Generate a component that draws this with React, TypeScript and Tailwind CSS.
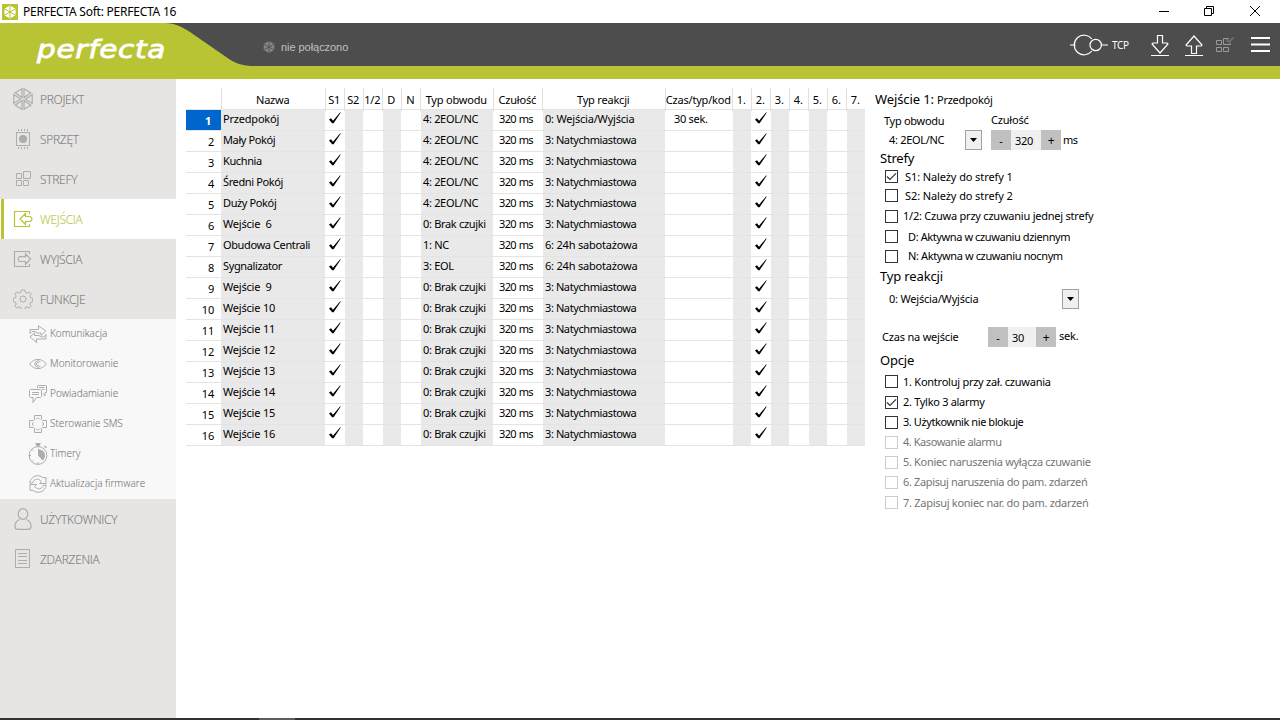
import type { ReactNode } from "react";

type IconProps = { children: ReactNode; w: number; h: number; className?: string };

function Icon({ children, w, h, className = "" }: IconProps) {
  return (
    <svg width={w} height={h} viewBox={`0 0 ${w} ${h}`} fill="none" stroke="currentColor" strokeWidth="1" className={`shrink-0 ${className}`}>
      {children}
    </svg>
  );
}

function HexIcon() {
  return (
    <Icon w={20} h={22}>
      <path d="M9 .8 2.200 4.700 9 9.500zM11 .8l6.800 3.900L11 9.500zM.8 6.500v9L7.600 11zM19.200 6.500v9L12.400 11zM9 21.200l-6.800-3.900L9 12.500zM11 21.200l6.800-3.900-6.800-4.800z" strokeWidth="1.200" />
    </Icon>
  );
}

function ChipIcon() {
  return (
    <Icon w={20} h={20}>
      <rect x="3.500" y="3.500" width="13" height="13" />
      <circle cx="10" cy="10" r="4" fill="currentColor" stroke="none" />
      <path d="M5.500 0v2M8.500 0v2M11.500 0v2M14.500 0v2M5.500 18v2M8.500 18v2M11.500 18v2M14.500 18v2" />
    </Icon>
  );
}

function ZonesIcon() {
  return (
    <Icon w={18} h={18}>
      <path d="M2.500 3.500h5v5h-5zM2.500 10.500h5v5h-5zM9.500 10.500h5v5h-5zM9.500 1.500h7v7h-7z" />
    </Icon>
  );
}

function InputIcon() {
  return (
    <Icon w={20} h={18} className="[stroke-width:1.2]">
      <path d="M16.500 4V1.500h-15v15h15V14" />
      <path d="M7 9l5.500-5.500v3h4.700L18.800 8v2l-1.600 1.500h-4.700v3z" />
    </Icon>
  );
}

function OutputIcon() {
  return (
    <Icon w={20} h={18} className="[stroke-width:1.2]">
      <path d="M16.500 4V1.500h-15v15h15V14" />
      <path d="M17.500 9l-5-5.300v3H6.500L5.300 8v2l1.200 1.500h6v3z" />
    </Icon>
  );
}

function GearIcon() {
  return (
    <Icon w={20} h={20}>
      <circle cx="10" cy="10" r="3" />
      <path d="M8.300 1h3.400l.6 2.500 1.700.7 2.200-1.300 1.900 1.900-1.300 2.200.7 1.700 2.200.6v3.400l-2.200.6-.7 1.700 1.300 2.200-1.900 1.900-2.200-1.300-1.700.7-.6 2.200H8.300l-.6-2.200-1.700-.7-2.200 1.300-1.900-1.900L3.200 15l-.7-1.700-2.200-.6V9.300l2.200-.6L3.200 7 1.900 4.800l1.900-1.900L6 4.200l1.700-.7z" strokeLinejoin="round" />
    </Icon>
  );
}

function SwapIcon() {
  return (
    <Icon w={18} h={18}>
      <path d="M1 8.500v-4h8.500V.7L16.800 6 12 10.500V8H8L6 6.500H3z" />
      <path d="M17 9.500v4.500H7.500v3.500L1 11.800 5.500 8v2.500H10l2 1.500h3z" />
    </Icon>
  );
}

function EyeIcon() {
  return (
    <Icon w={18} h={12}>
      <path d="M.7 6C5-.2 13-.2 17.300 6 13 12.200 5 12.200.7 6z" />
      <path d="M11.500 4a3.200 3.200 0 1 0 0 4M10 5a1.500 1.500 0 1 0 0 2" />
    </Icon>
  );
}

function ChatIcon() {
  return (
    <Icon w={18} h={20}>
      <path d="M1.500 5.500h10l1 1v6l-1 1H7.500L4 18.500v-5H1.500l-1-1v-6zM3 8.500h7M3 10.500h7" />
      <path d="M8.500 4V2l1-.5h7l1 .5v6.500H16V12l-2-2.500M10 3.500h5.500M13 5.500h2.500" />
    </Icon>
  );
}

function PadIcon() {
  return (
    <Icon w={18} h={18}>
      <path d="M5.500.5h7v4l1 1h4v7h-4l-1 1v4h-7v-4l-1-1h-4v-7h4l1-1z" />
      <path d="M7 4.500l2-2 2 2M7 13.500l2 2 2-2M5 7L3 9l2 2M13 7l2 2-2 2" />
    </Icon>
  );
}

function TimerIcon() {
  return (
    <Icon w={20} h={22}>
      <circle cx="10" cy="12.500" r="8.900" />
      <path d="M7.500.7h5M10 .7v3M8 2h4M16.500 3l1.800 1.800" strokeWidth="1.500" />
      <path d="M10 6v6.500l4.600 5c4-3 3.500-10.500-4.600-11.500z" fill="currentColor" stroke="none" />
      <path d="M1 12.500h2M10 19v2M4 6.500l1.200 1.200M4 18.500l1.200-1.200" />
    </Icon>
  );
}

function RefreshIcon() {
  return (
    <Icon w={18} h={18}>
      <path d="M.7 8C2 1 9-1.500 14.200 2.800L17 2.500v6h-6.500l2-2C9 2.700 5 3.800 3.500 8z" />
      <path d="M17.300 10C16 17 9 19.500 3.800 15.200L1 15.500v-6h6.500l-2 2c3.500 3.800 7.500 2.700 9-1.500z" />
    </Icon>
  );
}

function UserIcon() {
  return (
    <Icon w={18} h={22}>
      <ellipse cx="9" cy="6" rx="4.800" ry="5.300" strokeWidth="1.200" />
      <path d="M5.500 11.500C3 12.500 1 14 1 18.500c0 2 1 2.900 3 2.900h10c2 0 3-.9 3-2.900 0-4.500-2-6-4.500-7" strokeWidth="1.200" />
    </Icon>
  );
}

function ListIcon() {
  return (
    <Icon w={18} h={20}>
      <path d="M1.500.5h14v18h-14zM4 4.500h9M4 7.500h9M4 11.500h9M4 14.500h9" />
    </Icon>
  );
}

function NavItem({ icon, label, active = false }: { icon: ReactNode; label: string; active?: boolean }) {
  return (
    <div className={active ? "flex h-10 items-center bg-white pl-px text-[#b8c433]" : "flex h-10 items-center pl-px text-[#767676]"}>
      <span className={active ? "h-10 w-[3px] bg-[#b8c433]" : "h-10 w-[3px]"} />
      <span className={active ? "flex w-9 justify-center pl-px" : "flex w-9 justify-center pl-px text-[#adadab]"}>{icon}</span>
      <span className="pt-px text-[12px] font-light tracking-[-0.3px] [-webkit-text-stroke:0.1px_currentColor]">{label}</span>
    </div>
  );
}

function SubItem({ icon, label }: { icon: ReactNode; label: string }) {
  return (
    <div className="flex h-[30px] items-center pb-px pl-[27px] text-[#767676]">
      <span className="flex w-[23px] justify-center pr-0.5 text-[#adadab]">{icon}</span>
      <span className="text-[10px] font-light tracking-[0.03px] [-webkit-text-stroke:0.1px_currentColor]">{label}</span>
    </div>
  );
}

function Sidebar() {
  return (
    <nav className="flex w-44 shrink-0 flex-col bg-[#e6e5e3] font-['Open_Sans',sans-serif]">
      <NavItem icon={<HexIcon />} label="PROJEKT" />
      <NavItem icon={<ChipIcon />} label="SPRZĘT" />
      <NavItem icon={<ZonesIcon />} label="STREFY" />
      <NavItem icon={<InputIcon />} label="WEJŚCIA" active />
      <NavItem icon={<OutputIcon />} label="WYJŚCIA" />
      <NavItem icon={<GearIcon />} label="FUNKCJE" />
      <div className="bg-[#f8f8f8]">
        <SubItem icon={<SwapIcon />} label="Komunikacja" />
        <SubItem icon={<EyeIcon />} label="Monitorowanie" />
        <SubItem icon={<ChatIcon />} label="Powiadamianie" />
        <SubItem icon={<PadIcon />} label="Sterowanie SMS" />
        <SubItem icon={<TimerIcon />} label="Timery" />
        <SubItem icon={<RefreshIcon />} label="Aktualizacja firmware" />
      </div>
      <NavItem icon={<UserIcon />} label="UŻYTKOWNICY" />
      <NavItem icon={<ListIcon />} label="ZDARZENIA" />
    </nav>
  );
}

function TitleBar() {
  return (
    <div className="flex h-[23px] items-center bg-white pl-0.5">
      <svg width="16" height="16" viewBox="0 0 16 16">
        <rect width="16" height="16" fill="#b8c433" />
        <path d="M8 1.500 13.600 4.700v6.600L8 14.500 2.400 11.300V4.700z" fill="#fff" />
        <path d="M8 1v14M2 4.600l12 6.800M14 4.600 2 11.400" stroke="#b8c433" strokeWidth="1" />
      </svg>
      <span className="ml-[5px] text-[12px] tracking-[-0.24px] text-black">PERFECTA Soft: PERFECTA 16</span>
      <div className="ml-auto flex items-center text-black">
        <Icon w={12} h={12} className="mr-[33px]"><path d="M1 5.500h10" /></Icon>
        <Icon w={12} h={12} className="mr-[34px]"><path d="M1.500 2.500h7v7h-7zM3.500 2.500v-2h7v7H9" /></Icon>
        <Icon w={12} h={12} className="mr-[19px]"><path d="M1 0l10 10M11 0 1 10" /></Icon>
      </div>
    </div>
  );
}

function Header() {
  return (
    <header className="flex h-14 bg-[#b8c433]">
      <div className="relative w-[256px] shrink-0">
        <svg width="256" height="43" viewBox="0 0 256 43" className="block">
          <path d="M165 0c10 .5 16 3 25 9l39 27c9 5.500 15 7 27 7V0z" fill="#4d4d4d" />
        </svg>
        <span className="absolute top-3 left-[37px] origin-left scale-x-[1.18] font-['DejaVu_Sans',sans-serif] text-[25px] leading-[30px] tracking-[0.6px] text-white italic [-webkit-text-stroke:0.8px_#fff]">perfecta</span>
      </div>
      <div className="flex h-[43px] grow items-center bg-[#4d4d4d] pl-[7px]">
        <svg width="12" height="12" viewBox="0 0 12 12" className="mt-[5px]">
          <path d="M6 0 11.300 3v6L6 12 .7 9V3z" fill="#858585" />
          <path d="M6 0v12M.5 3l11 6M11.500 3l-11 6" stroke="#4d4d4d" strokeWidth=".8" />
        </svg>
        <span className="mt-[5px] ml-1.5 font-['Liberation_Sans',sans-serif] text-[11px] tracking-[-0.05px] text-[#c0c0c0]">nie połączono</span>
        <div className="mr-[9px] ml-auto flex items-center text-white">
          <Icon w={38} h={22}>
            <path d="M0 11h5.500M31.500 11H38M21.800 5a9.800 9.800 0 1 0 0 12" strokeWidth="1.200" />
            <circle cx="25.700" cy="11" r="5.700" strokeWidth="1.200" />
          </Icon>
          <span className="ml-1 w-[38px] pt-px text-[10px] tracking-[-0.3px]">TCP</span>
          <Icon w={20} h={24}>
            <path d="M7.500 2.500h5v7.500H17l1 1-8 9-8-9 1-1h4.500zM1 22.500h18" strokeWidth="1.200" />
          </Icon>
          <Icon w={20} h={24} className="ml-3.5">
            <path d="M7.500 20.500h5V13H17l1-1-8-9-8 9 1 1h4.500zM1 22.500h18" strokeWidth="1.200" />
          </Icon>
          <Icon w={20} h={18} className="ml-3 text-[#9a9a9a]">
            <path d="M.5 4.500h5v4h-5zM.5 11.500h5v4h-5zM7.500 11.500h5v4h-5zM13 2.500H7.500v6h7V7" />
            <path d="M10 3l3 3 4.500-4.500" stroke="#777" strokeWidth="1.500" />
          </Icon>
          <Icon w={20} h={18} className="ml-[15px]">
            <path d="M0 2h19M0 8.500h19M0 15h19" strokeWidth="2" />
          </Icon>
        </div>
      </div>
    </header>
  );
}

type Row = { name: string; circuit: string; reaction: string; time?: string };

const idle = (name: string): Row => ({ name, circuit: "0: Brak czujki", reaction: "3: Natychmiastowa" });

const rows: Row[] = [
  { name: "Przedpokój", circuit: "4: 2EOL/NC", reaction: "0: Wejścia/Wyjścia", time: "30 sek." },
  { name: "Mały Pokój", circuit: "4: 2EOL/NC", reaction: "3: Natychmiastowa" },
  { name: "Kuchnia", circuit: "4: 2EOL/NC", reaction: "3: Natychmiastowa" },
  { name: "Średni Pokój", circuit: "4: 2EOL/NC", reaction: "3: Natychmiastowa" },
  { name: "Duży Pokój", circuit: "4: 2EOL/NC", reaction: "3: Natychmiastowa" },
  idle("Wejście  6"),
  { name: "Obudowa Centrali", circuit: "1: NC", reaction: "6: 24h sabotażowa" },
  { name: "Sygnalizator", circuit: "3: EOL", reaction: "6: 24h sabotażowa" },
  idle("Wejście  9"),
  idle("Wejście 10"),
  idle("Wejście 11"),
  idle("Wejście 12"),
  idle("Wejście 13"),
  idle("Wejście 14"),
  idle("Wejście 15"),
  idle("Wejście 16"),
];

const headers = ["Nazwa", "S1", "S2", "1/2", "D", "N", "Typ obwodu", "Czułość", "Typ reakcji", "Czas/typ/kod", "1.", "2.", "3.", "4.", "5.", "6.", "7."];

const columns = "grid grid-cols-[35px_104px_repeat(5,19px)_73px_49px_123px_67px_repeat(7,19px)]";

function Tick() {
  return (
    <svg width="12" height="12" viewBox="0 0 12 12" className="mt-0.5 ml-1">
      <path d="M0 7.400 2 6.200 4 8.800 11 .4l.8.2L4.600 11.300H3.200z" fill="#000" />
    </svg>
  );
}

function Gray({ children, tight = "" }: { children?: ReactNode; tight?: string }) {
  return <div className={`ml-px bg-[#e9e9e9] pl-0.5 whitespace-pre ${tight}`}>{children}</div>;
}

function InputsTable() {
  return (
    <div className="ml-2.5 w-[679px] shrink-0 pt-[9px]">
      <div className={`${columns} h-[22px] border-b border-[#e4e4e4] leading-[23px]`}>
        <div />
        {headers.map((h) => (
          <div key={h} className="flex justify-center border-l border-[#e0e0e0] pr-[1.5px] whitespace-nowrap">{h}</div>
        ))}
      </div>
      {rows.map((r, i) => (
        <div key={r.name} className={`${columns} h-[21px] grid-rows-[20px] border-b border-[#e4e4e4] leading-[18px]`}>
          <div className={i === 0 ? "bg-[#0066cc] pr-2.5 text-right leading-[22px] font-bold text-white" : "pr-[7px] text-right leading-[22px]"}>{i + 1}</div>
          <div className={r.name.startsWith("Wej") || i === 0 ? "bg-[#e9e9e9] pl-0.5 whitespace-pre" : "bg-[#e9e9e9] pl-0.5 tracking-[-0.38px] whitespace-pre"}>{r.name}</div>
          <div><Tick /></div>
          <Gray />
          <div />
          <Gray />
          <div />
          <Gray tight="tracking-[-0.32px]">{r.circuit}</Gray>
          <div className="pl-1.5 tracking-[-0.65px] [word-spacing:0.6px]">320 ms</div>
          <Gray tight={r.reaction.startsWith("3") ? "tracking-[-0.4px]" : "tracking-[-0.2px]"}>{r.reaction}</Gray>
          <div className="pl-[9px] tracking-[-0.3px]">{r.time}</div>
          <Gray />
          <div><Tick /></div>
          <Gray />
          <div />
          <Gray />
          <div />
          <Gray />
        </div>
      ))}
    </div>
  );
}

type CheckProps = { label: string; checked?: boolean; disabled?: boolean; gap?: string; height?: string; tight?: string };

function Check({ label, checked = false, disabled = false, gap = "ml-[5px]", height = "h-5", tight = "" }: CheckProps) {
  return (
    <div className={`flex items-center pl-2.5 ${height} ${disabled ? "text-[#747474]" : "text-black"}`}>
      <span className={disabled ? "h-[13px] w-[13px] border border-[#cccccc]" : "h-[13px] w-[13px] border border-[#333333]"}>
        {checked && (
          <svg width="11" height="11" viewBox="0 0 11 11" fill="none" stroke="#333" strokeWidth="1.200">
            <path d="M1 5.500 4 8.500 10 2.300" />
          </svg>
        )}
      </span>
      <span className={`pt-px ${gap} ${tight}`}>{label}</span>
    </div>
  );
}

function DropButton() {
  return (
    <span className="flex h-5 w-[17px] items-center justify-center border border-[#a0a0a0] bg-[#f0f0f0]">
      <svg width="7" height="4" viewBox="0 0 7 4"><path d="M0 0h7L3.500 4z" fill="#000" /></svg>
    </span>
  );
}

function Spinner({ value, width }: { value: string; width: string }) {
  return (
    <span className="flex h-5 leading-[21px]">
      <span className="w-5 bg-[#c0c0c0] text-center">-</span>
      <span className={`${width} bg-[#f0f0f0] pl-1 tracking-[-0.35px]`}>{value}</span>
      <span className="w-5 bg-[#c0c0c0] text-center text-[12px]">+</span>
    </span>
  );
}

function DetailsPanel() {
  return (
    <section className="ml-2.5 w-[240px] pt-[9px] whitespace-nowrap">
      <h2 className="flex h-[23px] items-center"><span className="text-[13px] tracking-[-0.1px]">Wejście 1:</span><span className="ml-[3px] pt-px tracking-[-0.25px]">Przedpokój</span></h2>
      <div className="flex h-[19px] items-center pl-[9px]">
        <span className="w-[107px] pt-0.5 tracking-[-0.3px]">Typ obwodu</span>
        <span>Czułość</span>
      </div>
      <div className="flex h-5 items-center pl-3.5">
        <span className="w-[76px] tracking-[-0.3px]">4: 2EOL/NC</span>
        <DropButton />
        <span className="ml-[9px]"><Spinner value="320" width="w-[30px]" /></span>
        <span className="ml-0.5 tracking-[-0.6px]">ms</span>
      </div>
      <h3 className="flex h-[17px] items-center pl-[5px] text-[13px] tracking-[-0.2px]">Strefy</h3>
      <Check label="S1: Należy do strefy 1" checked gap="ml-[7px]" height="h-[19px]" tight="tracking-[-0.1px]" />
      <Check label="S2: Należy do strefy 2" gap="ml-[7px]" height="h-[19px]" tight="tracking-[-0.1px]" />
      <Check label="1/2: Czuwa przy czuwaniu jednej strefy" height="h-[22px]" tight="tracking-[-0.23px]" />
      <Check label="D: Aktywna w czuwaniu dziennym" gap="ml-2.5" height="h-[19px]" tight="tracking-[-0.4px]" />
      <Check label="N: Aktywna w czuwaniu nocnym" gap="ml-2.5" height="h-5" tight="tracking-[-0.38px]" />
      <h3 className="flex h-[21px] items-center pl-[5px] text-[13px] tracking-[-0.15px]">Typ reakcji</h3>
      <div className="flex h-6 items-center pl-3.5">
        <span className="w-[173px]">0: Wejścia/Wyjścia</span>
        <DropButton />
      </div>
      <div className="mt-4 flex h-5 items-center pl-[7px]">
        <span className="w-[106px]">Czas na wejście</span>
        <Spinner value="30" width="w-7" />
        <span className="ml-[3px] pb-px">sek.</span>
      </div>
      <h3 className="mt-1 flex h-5 items-center pl-[5px] text-[13px] tracking-[-0.2px]">Opcje</h3>
      <Check label="1. Kontroluj przy zał. czuwania" height="h-[21px]" tight="tracking-[-0.25px]" />
      <Check label="2. Tylko 3 alarmy" checked tight="tracking-[-0.3px]" />
      <Check label="3. Użytkownik nie blokuje" tight="tracking-[-0.42px]" />
      <Check label="4. Kasowanie alarmu" disabled tight="tracking-[-0.45px]" />
      <Check label="5. Koniec naruszenia wyłącza czuwanie" disabled tight="tracking-[-0.33px]" />
      <Check label="6. Zapisuj naruszenia do pam. zdarzeń" disabled tight="tracking-[-0.36px]" />
      <Check label="7. Zapisuj koniec nar. do pam. zdarzeń" disabled height="h-[21px]" tight="tracking-[-0.28px]" />
    </section>
  );
}

export default function App() {
  return (
    <div className="flex h-[720px] w-[1280px] flex-col overflow-hidden bg-white font-['Noto_Sans',sans-serif] text-[11px] tracking-[-0.2px] text-black">
      <TitleBar />
      <Header />
      <main className="flex min-h-0 grow">
        <Sidebar />
        <InputsTable />
        <DetailsPanel />
      </main>
      <footer className="flex h-0.5 bg-[#343132] pl-[259px]"><span className="w-9 bg-[#5f5c5d]" /></footer>
    </div>
  );
}
